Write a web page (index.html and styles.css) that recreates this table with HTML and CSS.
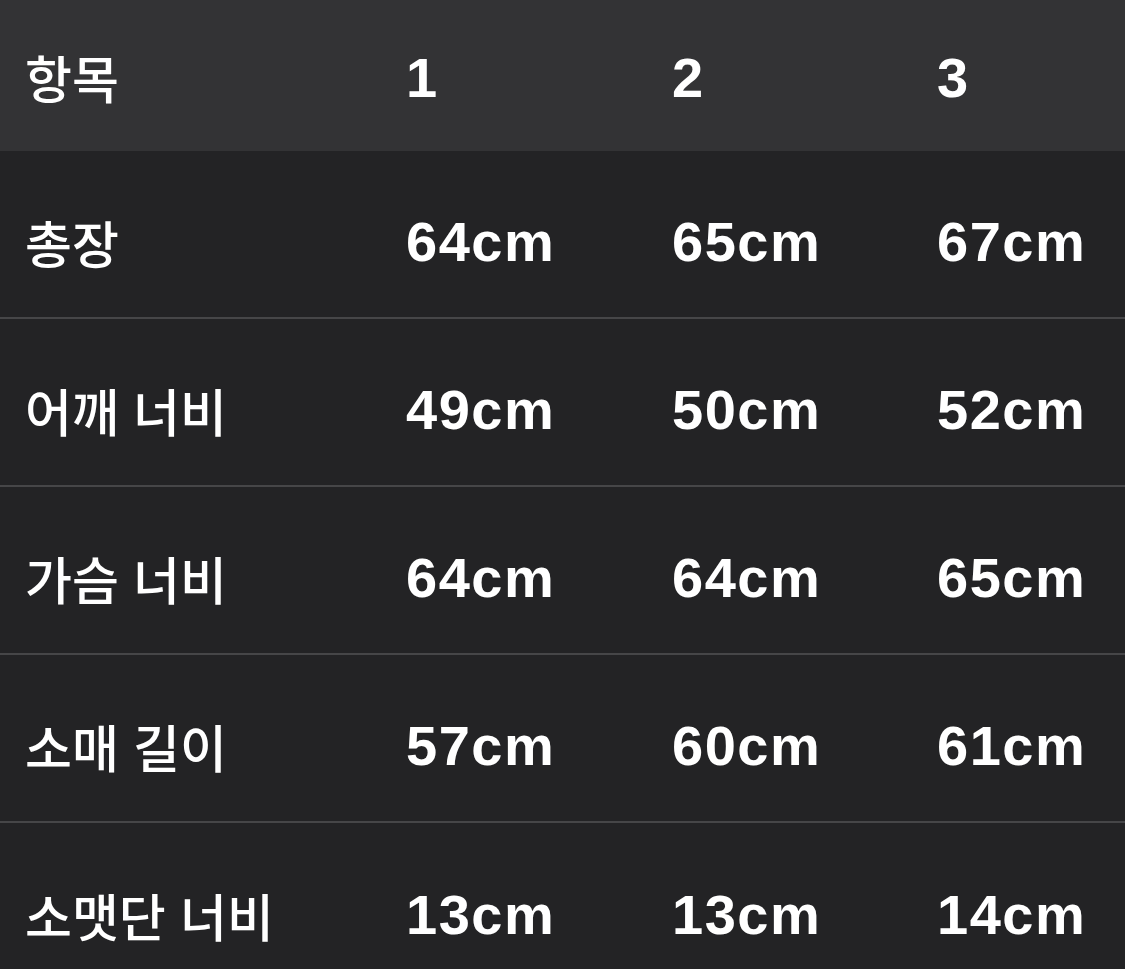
FILE: index.html
```html
<!DOCTYPE html>
<html lang="ko">
<head>
<meta charset="utf-8">
<title>사이즈</title>
<link rel="stylesheet" href="styles.css">
</head>
<body>
<div class="table">
  <div class="row head">
    <div class="cell label">항목</div><div class="cell num">1</div><div class="cell num">2</div><div class="cell num">3</div>
  </div>
  <div class="row">
    <div class="cell label">총장</div><div class="cell num">64cm</div><div class="cell num">65cm</div><div class="cell num">67cm</div>
  </div>
  <div class="row">
    <div class="cell label">어깨 너비</div><div class="cell num">49cm</div><div class="cell num">50cm</div><div class="cell num">52cm</div>
  </div>
  <div class="row">
    <div class="cell label">가슴 너비</div><div class="cell num">64cm</div><div class="cell num">64cm</div><div class="cell num">65cm</div>
  </div>
  <div class="row">
    <div class="cell label">소매 길이</div><div class="cell num">57cm</div><div class="cell num">60cm</div><div class="cell num">61cm</div>
  </div>
  <div class="row last">
    <div class="cell label">소맷단 너비</div><div class="cell num">13cm</div><div class="cell num">13cm</div><div class="cell num">14cm</div>
  </div>
</div>
</body>
</html>
```

FILE: styles.css
```css
html, body {
  margin: 0;
  padding: 0;
  background: #232325;
  overflow: hidden;
}
.table {
  width: 1125px;
  color: #ffffff;
}
.row {
  display: grid;
  grid-template-columns: 381px 266px 265px 1fr;
  height: 168px;
  box-sizing: border-box;
  border-bottom: 2px solid #464648;
  align-items: center;
  padding-top: 16px;
}
.row.head {
  height: 151px;
  background: #333335;
  border-bottom: none;
  padding-top: 4px;
}
.row.last {
  border-bottom: none;
}
.cell {
  padding-left: 25px;
  white-space: nowrap;
  line-height: 1.1;
}
.label {
  font-family: "Noto Sans CJK KR", "Liberation Sans", sans-serif;
  font-weight: 500;
  font-size: 51px;
}
.num {
  font-family: "Liberation Sans", "Noto Sans CJK KR", sans-serif;
  font-weight: bold;
  font-size: 56px;
  letter-spacing: 1.5px;
}
```
